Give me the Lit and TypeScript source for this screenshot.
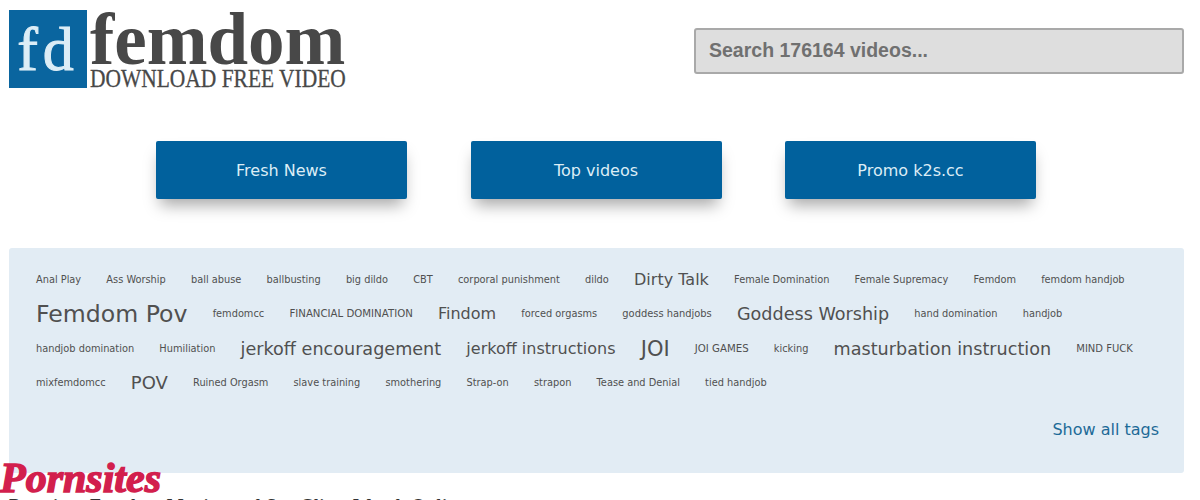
import { LitElement, html, css } from "lit";
import { customElement } from "lit/decorators.js";

const tags: [string, number][] = [
  ["Anal Play", 9.8], ["Ass Worship", 9.8], ["ball abuse", 9.8], ["ballbusting", 9.8], ["big dildo", 9.8], ["CBT", 9.8],
  ["corporal punishment", 9.8], ["dildo", 9.8], ["Dirty Talk", 16], ["Female Domination", 9.8], ["Female Supremacy", 9.8],
  ["Femdom", 9.8], ["femdom handjob", 9.8], ["Femdom Pov", 23.6], ["femdomcc", 9.8], ["FINANCIAL DOMINATION", 10.2],
  ["Findom", 16], ["forced orgasms", 9.8], ["goddess handjobs", 9.9], ["Goddess Worship", 17.6], ["hand domination", 9.8],
  ["handjob", 9.8], ["handjob domination", 9.8], ["Humiliation", 9.8], ["jerkoff encouragement", 17.6], ["jerkoff instructions", 16],
  ["JOI", 21], ["JOI GAMES", 10.2], ["kicking", 9.8], ["masturbation instruction", 17.6], ["MIND FUCK", 10],
  ["mixfemdomcc", 9.8], ["POV", 18], ["Ruined Orgasm", 9.8], ["slave training", 9.8], ["smothering", 9.8], ["Strap-on", 9.8],
  ["strapon", 9.8], ["Tease and Denial", 9.8], ["tied handjob", 9.8],
];

@customElement("app-root")
export class AppRoot extends LitElement {
  static styles = css`
    :host { display: block; height: 500px; overflow: hidden; background: #fff; font-family: "DejaVu Sans", Verdana, sans-serif; position: relative; }
    .wrap { padding: 10px 16px 0 9px; display: flex; flex-direction: column; }
    header { display: flex; justify-content: space-between; align-items: flex-start; height: 131px; }
    .logo { display: flex; gap: 3px; }
    .fd { width: 78px; height: 78px; background: #0a659f; color: #dcedf6; font: 400 62px/78px "Liberation Serif", serif; letter-spacing: 5px; text-align: center; -webkit-text-stroke: 1px #dcedf6; }
    .brand { display: flex; flex-direction: column; color: #484848; font-family: "Liberation Serif", serif; width: 258px; }
    .name { font-size: 73px; font-weight: 700; line-height: 60px; white-space: nowrap; }
    .sub { font-size: 26px; line-height: 18px; white-space: nowrap; transform: scaleX(.825); transform-origin: left center; -webkit-text-stroke: .3px #484848; }
    .search { margin-top: 18px; height: 42px; background: #dedede; border: 2px solid #a9a9a9; border-radius: 3px; color: #707070; font: 700 19.5px/41px "Liberation Sans", Arial, sans-serif; padding-left: 13px; box-sizing: content-box; width: 473px; }
    nav { display: flex; justify-content: center; gap: 63.5px; height: 107px; padding-right: 1px; }
    nav a { width: 251px; height: 58px; background: #01619d; color: #dcedf6; border-radius: 2px; font-size: 16px; line-height: 60px; text-align: center; box-shadow: 0 10px 16px -4px rgba(0,0,0,.35); }
    .panel { background: #e2ecf4; border-radius: 3px; height: 225px; box-sizing: border-box; padding: 15px 14px 0 14.4px; display: flex; flex-direction: column; }
    .tags { display: flex; flex-wrap: wrap; align-items: center; height: 137px; align-content: flex-start; color: #505050; }
    .tags span { height: 34.3px; line-height: 34px; padding: 0 12.6px; white-space: nowrap; }
    .all { margin-top: 20px; text-align: right; color: #1d6a97; font-size: 16px; padding-right: 11px; }
    .ps { position: absolute; left: 0; top: 457px; color: #d21f4d; font: italic 700 42px/42px "Liberation Serif", serif; -webkit-text-stroke: 1.5px #d21f4d; }
    .foot { position: absolute; left: 9px; top: 496px; color: #333; font: 700 18px/20px "Liberation Serif", serif; white-space: nowrap; letter-spacing: .6px; }
  `;
  render() {
    return html`<div class="wrap">
      <header>
        <div class="logo"><div class="fd">fd</div><div class="brand"><div class="name">femdom</div><div class="sub">DOWNLOAD FREE VIDEO</div></div></div>
        <div class="search">Search 176164 videos...</div>
      </header>
      <nav><a>Fresh News</a><a>Top videos</a><a>Promo k2s.cc</a></nav>
      <section class="panel">
        <div class="tags">${tags.map(([t, s]) => html`<span style="font-size:${s}px">${t}</span>`)}</div>
        <div class="all">Show all tags</div>
      </section>
    </div>
    <div class="ps">Pornsites</div>
    <div class="foot">Premium Femdom Movies and Sex Clips. Watch Online</div>`;
  }
}
